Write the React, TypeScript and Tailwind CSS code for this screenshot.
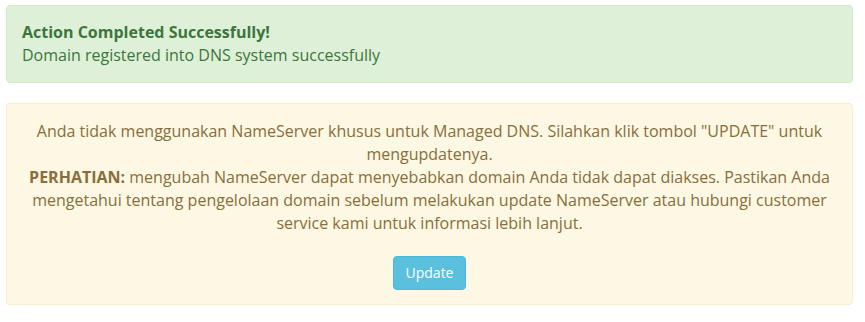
export default function App() {
  return (
    <div className="w-[865px] h-[322px] bg-white pt-[5px] pl-[6px] font-['Open_Sans',sans-serif] text-[16px] leading-[23px]">
      <div className="w-[847px] rounded border border-[#d6e9c6] bg-[#dff0d8] px-[15px] py-[15px] text-[#3c763d]">
        <strong className="font-bold">Action Completed Successfully!</strong>
        <div>Domain registered into DNS system successfully</div>
      </div>

      <div className="mt-[20px] w-[847px] rounded border border-[#faebcc] bg-[#fcf8e3] px-[15px] pt-[16px] pb-[14px] text-center text-[#8a6d3b]">
        <p className="mb-[21px]">
          Anda tidak menggunakan NameServer khusus untuk Managed DNS. Silahkan klik tombol "UPDATE" untuk mengupdatenya.
          <br />
          <strong className="font-bold">PERHATIAN:</strong> mengubah NameServer dapat menyebabkan domain Anda tidak dapat diakses. Pastikan Anda mengetahui tentang pengelolaan domain sebelum melakukan update NameServer atau hubungi customer service kami untuk informasi lebih lanjut.
        </p>
        <button className="h-[34px] rounded border border-[#46b8da] bg-[#5bc0de] px-[12px] text-[14px] leading-[20px] text-white">
          Update
        </button>
      </div>
    </div>
  )
}
